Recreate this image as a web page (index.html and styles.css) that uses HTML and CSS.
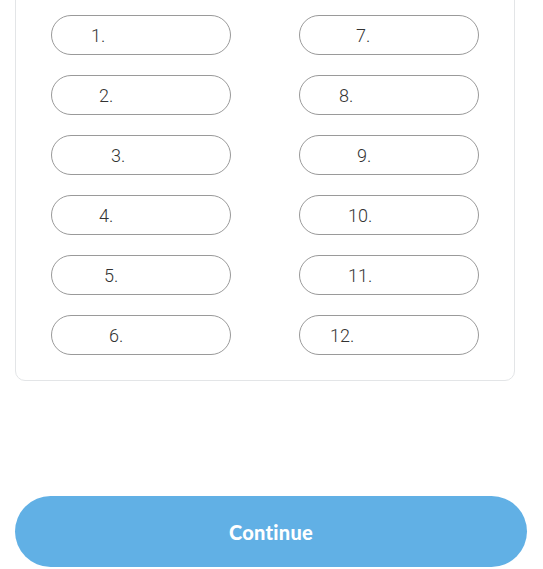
FILE: index.html
```html
<!DOCTYPE html>
<html lang="en">
<head>
    <meta charset="UTF-8">
    <meta name="viewport" content="width=device-width, initial-scale=1.0">
    <title>Recovery Phrase</title>
    <link rel="stylesheet" href="styles.css">
</head>
<body>

    <div class="phrase-card">
        <div class="phrase-grid">
            <div class="word-col">
                <div class="word w39">1.</div>
                <div class="word w47">2.</div>
                <div class="word w59">3.</div>
                <div class="word w47">4.</div>
                <div class="word w52">5.</div>
                <div class="word w57">6.</div>
            </div>
            <div class="word-col">
                <div class="word w56">7.</div>
                <div class="word w39">8.</div>
                <div class="word w57">9.</div>
                <div class="word w48">10.</div>
                <div class="word w48">11.</div>
                <div class="word w30">12.</div>
            </div>
        </div>
    </div>

    <!-- Bottom action -->
    <button class="continue-btn" type="button">Continue</button>

</body>
</html>
```

FILE: styles.css
```css
body {
    font-family: 'Roboto', 'Liberation Sans', sans-serif;
    margin: 0;
    padding: 0;
    background: #fff;
}

.phrase-card {
    width: 500px;
    box-sizing: border-box;
    margin: -21px 0 0 15px;
    padding: 35px 35px 25px 35px;
    border: 1px solid #e3e5e7;
    border-radius: 10px;
}

.phrase-grid {
    display: flex;
    gap: 68px;
}

.word-col {
    display: flex;
    flex-direction: column;
    gap: 20px;
}

.word {
    width: 180px;
    height: 40px;
    box-sizing: border-box;
    border: 1px solid #9a9a9a;
    border-radius: 20px;
    display: flex;
    align-items: center;
    font-size: 18px;
    font-weight: 300;
    color: #333;
}

/* where the number sits in each pill */
.w30 { padding-left: 30px; }
.w39 { padding-left: 39px; }
.w47 { padding-left: 47px; }
.w48 { padding-left: 48px; }
.w52 { padding-left: 52px; }
.w56 { padding-left: 56px; }
.w57 { padding-left: 57px; }
.w59 { padding-left: 59px; }

.continue-btn {
    display: block;
    width: 512px;
    height: 71px;
    margin: 115px 0 0 15px;
    border: none;
    border-radius: 36px;
    background-color: #61b0e5;
    color: #fff;
    font-family: 'Lato', 'Liberation Sans', sans-serif;
    font-size: 20px;
    font-weight: 900;
    letter-spacing: 0.3px;
    cursor: pointer;
}
```
